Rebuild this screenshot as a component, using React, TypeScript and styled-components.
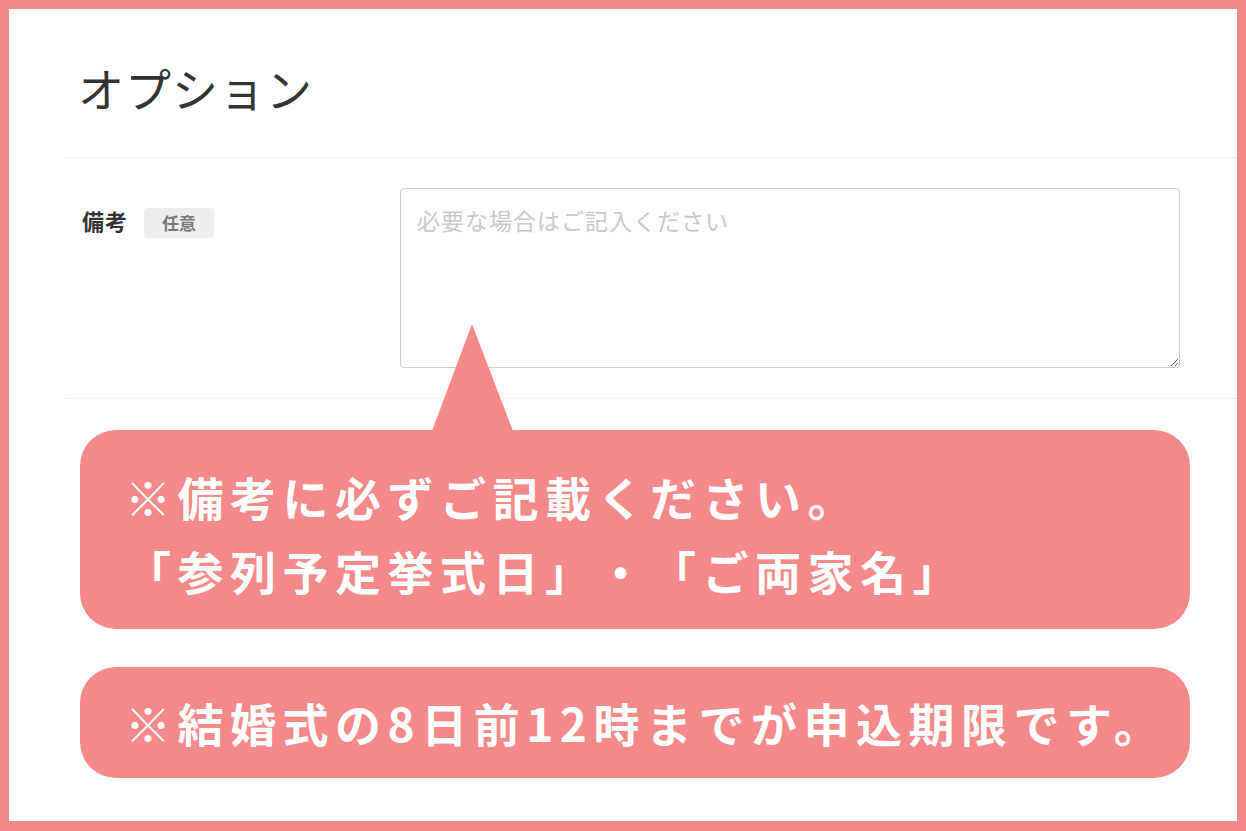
import styled, { createGlobalStyle } from "styled-components";

const pink = "#f38989";

const GlobalStyle = createGlobalStyle`
  html, body {
    margin: 0;
    padding: 0;
    background: #fff;
  }
  body {
    font-family: "Noto Sans CJK JP", "Noto Sans", sans-serif;
    color: #333;
    text-spacing-trim: space-all;
  }
`;

const Frame = styled.div`
  box-sizing: border-box;
  width: 1246px;
  height: 831px;
  border: 9px solid ${pink};
  border-bottom-width: 10px;
  background: #fff;
  overflow: hidden;
`;

const Form = styled.section`
  margin-left: 57px;
`;

const Heading = styled.h2`
  margin: 0;
  height: 149px;
  box-sizing: border-box;
  padding: 50px 12px 0;
  border-bottom: 1px solid #eee;
  font-size: 46px;
  line-height: 56px;
  font-weight: 400;
  letter-spacing: 1px;
  color: #333;
`;

const Row = styled.div`
  display: grid;
  grid-template-columns: 318px 1fr;
  padding: 30px 57px 30px 16px;
  border-bottom: 1px solid #eee;
`;

const LabelCell = styled.div`
  display: flex;
  align-items: center;
  gap: 16px;
  height: 64px;
  align-self: start;
`;

const Label = styled.span`
  font-size: 22px;
  font-weight: 700;
  letter-spacing: 1px;
  color: #333;
`;

const Badge = styled.span`
  display: inline-flex;
  align-items: center;
  height: 30px;
  padding: 0 18px;
  border-radius: 4px;
  background: #eee;
  color: #777;
  font-size: 17px;
  font-weight: 700;
  margin-top: 5px;
`;

const Memo = styled.textarea`
  box-sizing: border-box;
  width: 780px;
  height: 180px;
  padding: 14px 16px;
  border: 1px solid #ccc;
  border-radius: 4px;
  font-family: inherit;
  font-size: 23px;
  letter-spacing: 1px;
  line-height: 1.5;
  color: #333;
  resize: vertical;
  outline: none;

  &::placeholder {
    color: #c8c8c8;
  }
`;

const Notes = styled.div`
  display: flex;
  flex-direction: column;
  gap: 38px;
  padding: 31px 47px 0 71px;
`;

const Callout = styled.div<{ $pointer?: boolean }>`
  position: relative;
  box-sizing: border-box;
  min-height: ${(p) => (p.$pointer ? 199 : 111)}px;
  padding: ${(p) => (p.$pointer ? "29px 20px 22px 45px" : "18px 20px 19px 45px")};
  border-radius: 36px;
  background: ${pink};
  color: #fff;
  font-size: 46px;
  font-weight: 700;
  letter-spacing: 6.5px;
  line-height: 74px;
  white-space: nowrap;

  ${(p) =>
    p.$pointer &&
    `
    &::before {
      content: "";
      position: absolute;
      left: 352px;
      top: -106px;
      width: 0;
      height: 0;
      border-left: 40px solid transparent;
      border-right: 41px solid transparent;
      border-bottom: 107px solid ${pink};
    }
  `}
`;

const Line = styled.div``;

const App = () => {
  return (
    <Frame>
      <GlobalStyle />
      <Form>
        <Heading>オプション</Heading>
        <Row>
          <LabelCell>
            <Label>備考</Label>
            <Badge>任意</Badge>
          </LabelCell>
          <Memo placeholder="必要な場合はご記入ください" />
        </Row>
      </Form>
      <Notes>
        <Callout $pointer>
          <Line>※備考に必ずご記載ください。</Line>
          <Line>「参列予定挙式日」・「ご両家名」</Line>
        </Callout>
        <Callout>※結婚式の8日前12時までが申込期限です。</Callout>
      </Notes>
    </Frame>
  );
};

export default App;
